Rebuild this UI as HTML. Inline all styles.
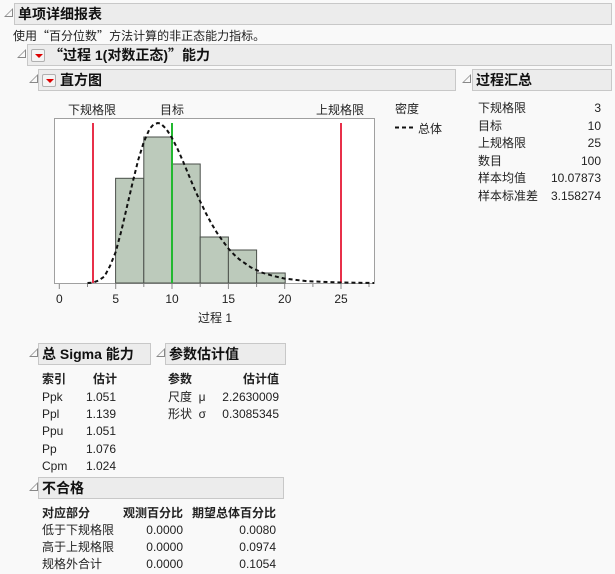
<!DOCTYPE html>
<html><head><meta charset="utf-8"><style>
body{margin:0;width:615px;height:574px;background:#f9f9f9;font-family:"Liberation Sans","Noto Sans CJK SC",sans-serif;font-size:12px;color:#222;position:relative;overflow:hidden}
.a{position:absolute;white-space:nowrap}
.q{font-family:"Noto Sans CJK SC",sans-serif}
.h{position:absolute;background:#ececec;border:1px solid #c8c8c8;box-sizing:border-box;font-weight:bold;font-size:14px;color:#111;line-height:20px;padding-left:3px}
.tri{position:absolute;width:0;height:0;border-left:9px solid transparent;border-bottom:9px solid #888}
.tri::after{content:"";position:absolute;left:-7px;top:2px;border-left:6px solid transparent;border-bottom:6px solid #f9f9f9}
.dd{display:inline-block;width:14px;height:13px;border:1px solid #b0b0b0;border-radius:2px;background:#f4f4f4;vertical-align:-2px;margin-right:4px;position:relative;box-sizing:border-box}
.dd::after{content:"";position:absolute;left:3px;top:4px;border-left:4px solid transparent;border-right:4px solid transparent;border-top:4px solid #d00}
.r{text-align:right}
</style></head><body>
<div class="tri" style="left:4px;top:8px"></div>
<div class="h" style="left:14px;top:3px;width:598px;height:22px">单项详细报表</div>
<div class="a" style="left:13px;top:27px">使用<span class="q">“</span>百分位数<span class="q">”</span>方法计算的非正态能力指标。</div>
<div class="tri" style="left:17px;top:49px"></div>
<div class="h" style="left:27px;top:44px;width:585px;height:22px;padding-left:3px"><span class="dd"></span><span class="q">“</span>过程 1(对数正态)<span class="q">”</span>能力</div>
<div class="tri" style="left:29px;top:74px"></div>
<div class="h" style="left:38px;top:69px;width:418px;height:22px;padding-left:3px"><span class="dd"></span>直方图</div>
<div class="tri" style="left:462px;top:74px"></div>
<div class="h" style="left:472px;top:69px;width:140px;height:22px">过程汇总</div>

<div class="a" style="left:68px;top:101px">下规格限</div>
<div class="a" style="left:160px;top:101px">目标</div>
<div class="a" style="left:316px;top:101px">上规格限</div>
<svg class="a" style="left:0;top:0" width="615" height="340">
<rect x="54.5" y="118.5" width="320" height="165" fill="#fff" stroke="#a0a0a0"/>
<g fill="#bccabb" stroke="#4a4f4a" stroke-width="1">
<rect x="115.6" y="178.3" width="28.2" height="104.7"/>
<rect x="143.8" y="137" width="28.2" height="146"/>
<rect x="172" y="164" width="28.2" height="119"/>
<rect x="200.2" y="237" width="28.2" height="46"/>
<rect x="228.4" y="250" width="28.2" height="33"/>
<rect x="256.6" y="273" width="28.6" height="10"/>
</g>
<line x1="93" y1="123" x2="93" y2="283" stroke="#e8304a" stroke-width="2"/>
<line x1="341" y1="123" x2="341" y2="283" stroke="#e8304a" stroke-width="2"/>
<line x1="172" y1="123" x2="172" y2="283" stroke="#22b830" stroke-width="2"/>
<polyline fill="none" stroke="#111" stroke-width="2" stroke-dasharray="4,3" points="87.5,283 93.1,282.6 98.7,280.5 104.4,276.5 110,266 115.7,252 121.3,231 126.9,207 132.5,183 138.2,160 143.8,142 149.5,129 153.5,124.5 157.8,123 160.7,123.5 166.3,129 172,138 177.6,149 183.3,162 188.9,175.5 194.5,189 200.2,201.5 205.8,213 211.4,223.5 217.1,233 222.7,241 228.4,248.5 234,254.5 239.6,259.6 250.9,267.4 262.2,272.7 273.5,276 284.7,278.6 307.2,281.2 341,282.5 374,283"/>
<g stroke="#888">
<line x1="59.3" y1="284" x2="59.3" y2="289"/><line x1="87.5" y1="284" x2="87.5" y2="287"/>
<line x1="115.7" y1="284" x2="115.7" y2="289"/><line x1="143.8" y1="284" x2="143.8" y2="287"/>
<line x1="172" y1="284" x2="172" y2="289"/><line x1="200.2" y1="284" x2="200.2" y2="287"/>
<line x1="228.4" y1="284" x2="228.4" y2="289"/><line x1="256.6" y1="284" x2="256.6" y2="287"/>
<line x1="284.7" y1="284" x2="284.7" y2="289"/><line x1="312.9" y1="284" x2="312.9" y2="287"/>
<line x1="341" y1="284" x2="341" y2="289"/><line x1="369" y1="284" x2="369" y2="287"/>
</g>
<g font-family="Liberation Sans" font-size="12" fill="#222" text-anchor="middle">
<text x="59.3" y="303">0</text><text x="115.7" y="303">5</text><text x="172" y="303">10</text>
<text x="228.4" y="303">15</text><text x="284.7" y="303">20</text><text x="341" y="303">25</text>
</g>
<line x1="395" y1="127.5" x2="416" y2="127.5" stroke="#111" stroke-width="2" stroke-dasharray="4,3"/>
</svg>
<div class="a" style="left:198px;top:309px">过程 1</div>
<div class="a" style="left:395px;top:100px">密度</div>
<div class="a" style="left:418px;top:120px">总体</div>

<div class="a" style="left:478px;top:100px;line-height:17.5px">下规格限<br>目标<br>上规格限<br>数目<br>样本均值<br>样本标准差</div>
<div class="a r" style="left:540px;top:100px;width:61px;line-height:17.5px">3<br>10<br>25<br>100<br>10.07873<br>3.158274</div>

<div class="tri" style="left:29px;top:348px"></div>
<div class="h" style="left:38px;top:343px;width:113px;height:22px">总 Sigma 能力</div>
<div class="tri" style="left:156px;top:348px"></div>
<div class="h" style="left:165px;top:343px;width:121px;height:22px">参数估计值</div>
<div class="a" style="left:42px;top:370px;font-weight:bold">索引</div>
<div class="a" style="left:93px;top:370px;font-weight:bold">估计</div>
<div class="a" style="left:42px;top:389px;line-height:17.2px">Ppk<br>Ppl<br>Ppu<br>Pp<br>Cpm</div>
<div class="a" style="left:86px;top:389px;line-height:17.2px">1.051<br>1.139<br>1.051<br>1.076<br>1.024</div>
<div class="a" style="left:168px;top:370px;font-weight:bold">参数</div>
<div class="a" style="left:243px;top:370px;font-weight:bold">估计值</div>
<div class="a" style="left:168px;top:389px;line-height:17.2px">尺度&nbsp;&nbsp;μ<br>形状&nbsp;&nbsp;σ</div>
<div class="a r" style="left:200px;top:389px;width:79px;line-height:17.2px">2.2630009<br>0.3085345</div>

<div class="tri" style="left:29px;top:482px"></div>
<div class="h" style="left:38px;top:477px;width:246px;height:22px">不合格</div>
<div class="a" style="left:42px;top:504px;font-weight:bold">对应部分</div>
<div class="a" style="left:123px;top:504px;font-weight:bold">观测百分比</div>
<div class="a" style="left:192px;top:504px;font-weight:bold">期望总体百分比</div>
<div class="a" style="left:42px;top:522px;line-height:17.2px">低于下规格限<br>高于上规格限<br>规格外合计</div>
<div class="a r" style="left:120px;top:522px;width:63px;line-height:17.2px">0.0000<br>0.0000<br>0.0000</div>
<div class="a r" style="left:200px;top:522px;width:76px;line-height:17.2px">0.0080<br>0.0974<br>0.1054</div>
</body></html>
